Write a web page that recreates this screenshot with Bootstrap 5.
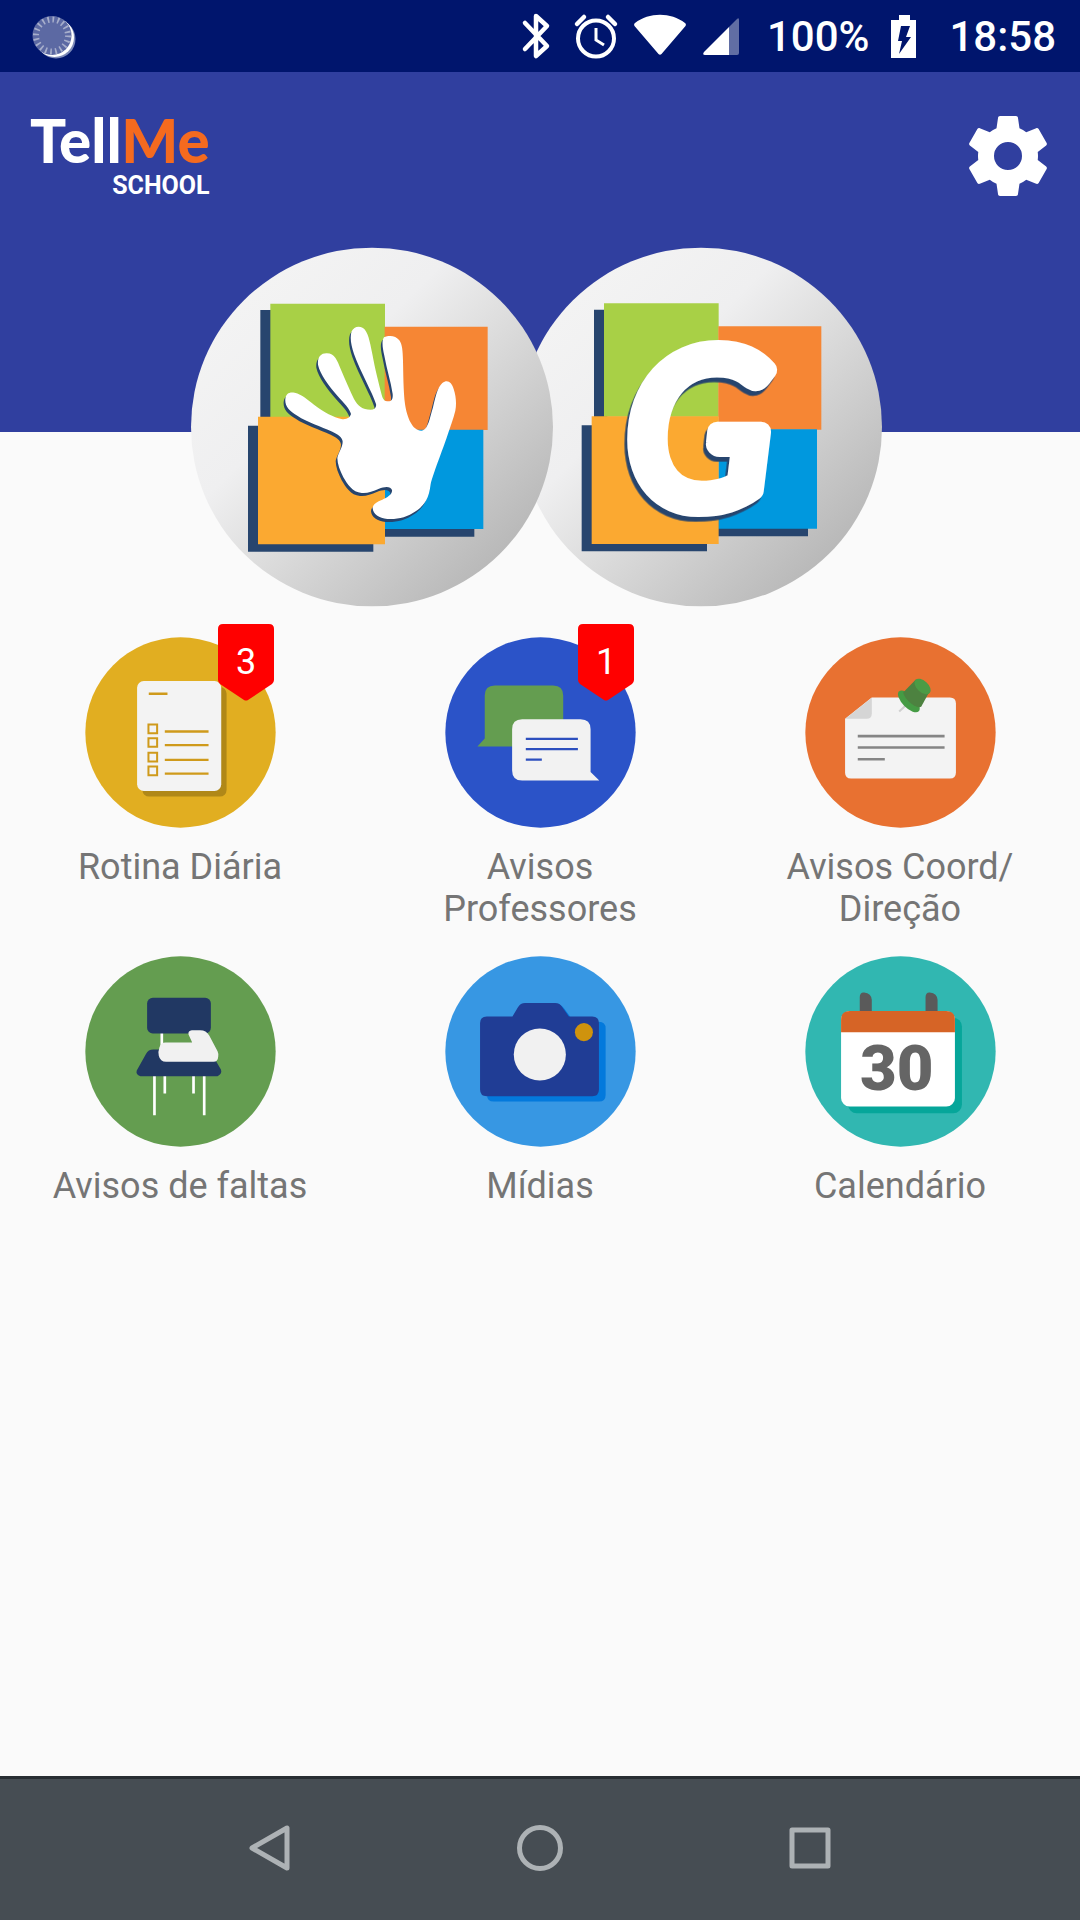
<!DOCTYPE html>
<html lang="pt-BR">
<head>
<meta charset="utf-8">
<meta name="viewport" content="width=device-width, initial-scale=1">
<title>TellMe School</title>
<link href="https://cdn.jsdelivr.net/npm/bootstrap@5.3.0/dist/css/bootstrap.min.css" rel="stylesheet">
<style>
  body { background: #fafafa; font-family: Roboto, "Liberation Sans", sans-serif; }
  svg { display: block; flex: none; }
  .status-bar { background: #00156d; height: 72px; padding: 2px 24px 0 32px; color: #fff; font-size: 42px; font-weight: 500; line-height: 48px; }
  .status-icons { gap: 12px; }
  .status-level { margin-left: 27px; margin-right: 22px; }
  .status-clock { margin-left: 32px; }
  .hero { background: linear-gradient(#303f9f 360px, #fafafa 360px); }
  .hero-top { height: 175px; padding: 0 24px 7px 30px; }
  .brand { line-height: 1; color: #fff; text-align: right; }
  .brand:hover { color: #fff; }
  .brand-name { font-family: Lato, sans-serif; font-weight: 900; font-size: 60px; line-height: 60px; }
  .brand-me { color: #f46a1f; }
  .brand-sub { font-weight: 700; font-size: 25px; line-height: 32px; }
  .plain-btn { background: none; border: 0; padding: 0; }
  .school-front { z-index: 1; }
  .school-back { margin-left: -33px; }
  .monogram { font-family: Lato, sans-serif; font-style: italic; font-weight: 400; font-size: 640px; fill: #fff; stroke: #fff; stroke-width: 60px; stroke-linejoin: round; filter: drop-shadow(-8px 14px 0 #27456e); }
  .menu { padding-top: 30px; row-gap: 26px; }
  .tile { color: #757575; font-size: 36px; line-height: 42px; gap: 18px; }
  .tile:hover { color: #757575; }
  .tile-label { max-width: 300px; text-align: center; }
  .pin-badge { left: 133px; top: -13px; }
  .nav-keys { background: #464d53; border-top: 3px solid #282e33; height: 144px; padding-bottom: 3px; }
  .nav-key { width: 25%; }
</style>
</head>
<body class="d-flex flex-column min-vh-100">

<svg width="0" height="0" class="position-absolute" aria-hidden="true">
  <defs>
    <linearGradient id="silver" x1=".15" y1=".15" x2=".88" y2=".88">
      <stop offset="0" stop-color="#f3f3f3"/><stop offset=".3" stop-color="#efeff0"/><stop offset=".5" stop-color="#dfdfdf"/><stop offset="1" stop-color="#b6b6b6"/>
    </linearGradient>
    <g id="blocks">
      <path fill="#27456e" d="M239 208h40v330h-40zM202 555h376v378H202zM600 800h281v88H600z"/>
      <path fill="#a8d046" d="M269 189h344v340H269z"/>
      <path fill="#f68634" d="M612 258h309v310H612z"/>
      <path fill="#0098de" d="M612 567h296v298H612z"/>
      <path fill="#fba931" d="M232 528h381v383H232z"/>
    </g>
    <path id="hand" d="M314 475C316 458 326 453 342 456C365 461 380 477 400 492C430 515 460 530 482 535C498 538 508 530 511 520C508 505 490 487 470 465C445 437 418 400 412 372C410 350 420 338 437 338C462 337 470 360 480 385C495 420 508 450 520 475C532 497 545 507 570 507C582 507 588 500 586 490C575 455 540 395 520 340C511 312 507 290 513 272C519 258 534 254 547 262C562 273 567 300 575 340C583 385 595 430 603 462C607 477 612 482 623 482C634 482 637 473 636 460C630 420 618 385 611 345C605 320 603 300 610 290C625 283 645 284 656 299C665 312 666 330 667 360C668 400 668 450 673 490C679 530 695 570 722 570C742 570 748 530 757 500C764 470 770 440 785 427C800 415 813 424 819 445C826 465 828 490 824 510C818 535 808 560 800 585C785 630 757 700 750 730C745 775 730 795 705 812C680 830 650 837 620 835C595 833 577 820 576 803C576 790 590 783 605 777C620 770 636 760 634 748C630 735 610 738 595 744C575 752 560 759 543 757C515 755 500 730 488 710C478 690 470 670 470 652C473 635 486 620 486 603C486 590 470 580 455 573C420 557 380 545 350 525C325 512 312 495 314 475Z"/>
  </defs>
</svg>

<div class="status-bar d-flex align-items-center justify-content-between">
  <svg width="44" height="44" viewBox="0 0 44 44" aria-hidden="true">
    <circle cx="24" cy="24" r="19.500" fill="#7d8ab8"/>
    <circle cx="22.500" cy="22.500" r="19.500" fill="#fff"/>
    <circle cx="20" cy="20.500" r="19.500" fill="#5c69a3"/>
    <circle cx="20" cy="20.500" r="16" fill="none" stroke="#a7aecb" stroke-width="6" stroke-dasharray="1.700 3.326"/>
  </svg>
  <div class="d-flex align-items-center">
    <div class="status-icons d-flex align-items-center">
      <svg width="48" height="48" viewBox="0 0 48 48" fill="none" stroke="#fff" stroke-width="4.500" stroke-linecap="round" stroke-linejoin="round" role="img" aria-label="Bluetooth"><path d="M13 10l22 23-11 10V3l11 10-22 23"/></svg>
      <svg width="48" height="48" viewBox="0 0 48 48" fill="none" stroke="#fff" stroke-width="4" role="img" aria-label="Alarme"><circle cx="24" cy="25.500" r="18"/><path d="M24 15v12l8 5" stroke-width="3"/><path d="M5 11l7-7M43 11l-7-7" stroke-width="4.500" stroke-linecap="round"/></svg>
      <svg width="56" height="48" viewBox="0 0 56 48" fill="#fff" role="img" aria-label="Wi-Fi"><path d="M3 10C17-1 39-1 53 10q1.500 1 .5 3L29.500 41q-1.500 1.500-3 0L2.500 13q-1-2 .5-3z"/></svg>
      <svg width="40" height="48" viewBox="0 0 40 48" fill="#fff" role="img" aria-label="Sinal"><path opacity=".38" d="M29 14l8-8q2-2 2 1v33q0 2-2 2h-8z"/><path d="M29 14v28H5q-3 0-1-3z"/></svg>
    </div>
    <span class="status-level">100%</span>
    <svg width="26" height="44" viewBox="0 0 26 44" role="img" aria-label="Carregando"><path fill="#fff" d="M8 0h11v5h6v38H0V5h8z"/><path fill="#00156d" d="M10 11h9l-4 11h5L8 39l3-13H7z"/></svg>
    <span class="status-clock">18:58</span>
  </div>
</div>

<header class="hero">
  <div class="hero-top d-flex align-items-center justify-content-between">
    <a href="#" class="brand d-flex flex-column text-decoration-none">
      <span class="brand-name">Tell<span class="brand-me">Me</span></span>
      <span class="brand-sub">SCHOOL</span>
    </a>
    <button type="button" class="plain-btn" aria-label="Configurações">
      <svg width="96" height="96" viewBox="0 0 24 24" fill="#fff"><path d="M19.43 12.980c.04-.32.07-.64.07-.98s-.03-.66-.07-.98l2.110-1.650c.19-.15.24-.42.12-.64l-2-3.460c-.12-.22-.39-.3-.61-.22l-2.490 1c-.52-.4-1.080-.73-1.690-.98l-.38-2.650C14.460 2.180 14.250 2 14 2h-4c-.25 0-.46.18-.49.42l-.38 2.650c-.61.25-1.170.59-1.690.98l-2.490-1c-.23-.09-.49 0-.61.22l-2 3.460c-.13.22-.07.49.12.64l2.110 1.650c-.04.32-.07.65-.07.98s.03.66.07.98l-2.110 1.650c-.19.15-.24.42-.12.64l2 3.460c.12.22.39.3.61.22l2.490-1c.52.4 1.080.73 1.690.98l.38 2.650c.03.24.24.42.49.42h4c.25 0 .46-.18.49-.42l.38-2.650c.61-.25 1.170-.59 1.690-.98l2.490 1c.23.09.49 0 .61-.22l2-3.460c.12-.22.07-.49-.12-.64zM12 15.500a3.500 3.500 0 1 1 0-7 3.500 3.500 0 0 1 0 7z"/></svg>
    </button>
  </div>
  <div class="d-flex justify-content-center pe-2">
    <button type="button" class="plain-btn school-front position-relative" aria-label="Educação infantil">
      <svg width="362" height="360" viewBox="31 19 1086 1080">
        <ellipse cx="574" cy="559" rx="543" ry="538" fill="url(#silver)"/>
        <use href="#blocks"/>
        <use href="#hand" fill="#27456e" transform="translate(-5 9)"/>
        <use href="#hand" fill="#fff"/>
      </svg>
    </button>
    <button type="button" class="plain-btn school-back">
      <svg width="362" height="360" viewBox="-3 19 1086 1080">
        <ellipse cx="540" cy="559" rx="543" ry="538" fill="url(#silver)"/>
        <use href="#blocks" transform="translate(-20 -1)"/>
        <text class="monogram" x="317" y="792">G</text>
      </svg>
    </button>
  </div>
</header>

<main class="flex-grow-1">
  <nav class="menu row row-cols-3 g-0">
    <div class="col">
      <a href="#" class="tile d-flex flex-column align-items-center text-decoration-none">
        <span class="position-relative">
          <svg width="191" height="191" viewBox="76 80 572 572" aria-hidden="true">
            <circle cx="362" cy="366" r="285" fill="#e1ae21"/>
            <rect x="248" y="230" width="252" height="328" rx="20" fill="#b08818"/>
            <rect x="232" y="212" width="252" height="329" rx="20" fill="#f3f3f3"/>
            <g fill="none" stroke="#cf9a1b" stroke-width="7"><path d="M267 250h56M315 363h131M315 404h131M315 448h131M315 489h131"/><path stroke-width="6" d="M266 342h26v26h-26zM266 383h26v26h-26zM266 427h26v26h-26zM266 468h26v26h-26z"/></g>
          </svg>
          <svg class="pin-badge position-absolute" width="56" height="77" viewBox="0 0 56 77"><path fill="#f00" d="M5 0h46q5 0 5 5v51q0 2-2 4L30 76q-2 1-4 0L2 60q-2-2-2-4V5q0-5 5-5z"/><text x="28" y="50" text-anchor="middle" font-size="36" fill="#fff">3</text></svg>
        </span>
        <span class="tile-label">Rotina Diária</span>
      </a>
    </div>
    <div class="col">
      <a href="#" class="tile d-flex flex-column align-items-center text-decoration-none">
        <span class="position-relative">
          <svg width="191" height="191" viewBox="76 80 572 572" aria-hidden="true">
            <circle cx="362" cy="366" r="285" fill="#2b53c8"/>
            <path fill="#649d50" d="M225 225h175q30 0 30 30v153H173l22-24V255q0-30 30-30z"/>
            <path fill="#f2f2f2" d="M307 326h175q30 0 30 30v128l26 26H307q-30 0-30-30V356q0-30 30-30z"/>
            <path stroke="#2d4fbe" stroke-width="7" d="M318 385h156M318 416h156M318 447h48"/>
          </svg>
          <svg class="pin-badge position-absolute" width="56" height="77" viewBox="0 0 56 77"><path fill="#f00" d="M5 0h46q5 0 5 5v51q0 2-2 4L30 76q-2 1-4 0L2 60q-2-2-2-4V5q0-5 5-5z"/><text x="28" y="50" text-anchor="middle" font-size="36" fill="#fff">1</text></svg>
        </span>
        <span class="tile-label">Avisos Professores</span>
      </a>
    </div>
    <div class="col">
      <a href="#" class="tile d-flex flex-column align-items-center text-decoration-none">
        <svg width="191" height="191" viewBox="106 80 572 572" aria-hidden="true">
          <circle cx="392" cy="366" r="285" fill="#e87131"/>
          <path fill="#f3f3f3" d="M306 261h234q18 0 18 18v207q0 18-18 18H244q-18 0-18-18V325z"/>
          <path fill="#d5d5d5" d="M306 262v48q0 15-15 15h-64z"/>
          <path stroke="#858585" stroke-width="8" d="M264 377h260M264 411h260M264 446h81"/>
          <path stroke="#cfcfcf" stroke-width="6" d="M388 303l22-20"/>
          <ellipse cx="417" cy="273" rx="42" ry="19" transform="rotate(45 417 273)" fill="#459b44"/>
          <path fill="#4d8240" d="M400 246l38-39 41 36-25 46q-10 5-30-10t-24-33z"/>
          <ellipse cx="458" cy="228" rx="29" ry="17" transform="rotate(42 458 228)" fill="#4b9b45"/>
        </svg>
        <span class="tile-label">Avisos Coord/ Direção</span>
      </a>
    </div>
    <div class="col">
      <a href="#" class="tile d-flex flex-column align-items-center text-decoration-none">
        <svg width="191" height="191" viewBox="135 47 572 572" aria-hidden="true">
          <circle cx="421" cy="333" r="285" fill="#649d50"/>
          <path stroke="#fff" stroke-width="8" d="M365 275v50M343 400v124M374 400v59M460 400v59M492 400v124"/>
          <rect x="321" y="172" width="191" height="107" rx="17" fill="#213863"/>
          <path fill="#213863" d="M340 327h150q17 0 24 12l28 48q5 12-10 20H301q-15-4-11-17l28-50q6-13 22-13z"/>
          <path fill="#f1f1f1" d="M376 306h80l-11-24q-2-12 10-13h25q18 0 27 16l25 47q3 6 2 16-1 16-14 16H378q-18 0-22-18-3-12 2-26 4-14 18-14z"/>
        </svg>
        <span class="tile-label">Avisos de faltas</span>
      </a>
    </div>
    <div class="col">
      <a href="#" class="tile d-flex flex-column align-items-center text-decoration-none">
        <svg width="191" height="191" viewBox="76 47 572 572" aria-hidden="true">
          <circle cx="362" cy="333" r="285" fill="#3797e3"/>
          <path fill="#0379dc" d="M415 192q14 4 19 14l28 38h75q20 0 20 20v199q0 20-20 20H222q-20 0-20-20V264z"/>
          <path fill="#203d95" d="M316 188h90q14 0 22 13l19 27h70q20 0 20 20v199q0 20-20 20H201q-20 0-20-20V248q0-20 20-20h77l16-27q8-13 22-13z"/>
          <circle cx="360" cy="342" r="78" fill="#f1f1f1"/>
          <circle cx="492" cy="275" r="27" fill="#cf930d"/>
        </svg>
        <span class="tile-label">Mídias</span>
      </a>
    </div>
    <div class="col">
      <a href="#" class="tile d-flex flex-column align-items-center text-decoration-none">
        <svg width="191" height="191" viewBox="76 47 572 572">
          <circle cx="362" cy="333" r="285" fill="#31b7b1"/>
          <rect x="205" y="232" width="341" height="286" rx="26" fill="#06a69a"/>
          <path fill="#5a5a5a" d="M240 220v-50q0-15 13-14 22 3 23 22v42zM437 220v-50q0-15 13-14 22 3 23 22v42z"/>
          <rect x="184" y="212" width="341" height="286" rx="26" fill="#fff"/>
          <path fill="#d66426" d="M184 275v-37q0-26 26-26h289q26 0 26 26v37z"/>
          <text x="351" y="449" text-anchor="middle" font-size="190" font-weight="900" fill="#656565">30</text>
        </svg>
        <span class="tile-label">Calendário</span>
      </a>
    </div>
  </nav>
</main>

<footer class="nav-keys d-flex align-items-center justify-content-center">
  <button type="button" class="nav-key plain-btn d-flex justify-content-center" aria-label="Voltar"><svg width="48" height="48" viewBox="0 0 48 48" fill="none" stroke="#adb2b5" stroke-width="5" stroke-linejoin="round"><path d="M41 4v40L6 24z"/></svg></button>
  <button type="button" class="nav-key plain-btn d-flex justify-content-center" aria-label="Início"><svg width="48" height="48" viewBox="0 0 48 48" fill="none" stroke="#adb2b5" stroke-width="5"><circle cx="24" cy="24" r="20.500"/></svg></button>
  <button type="button" class="nav-key plain-btn d-flex justify-content-center" aria-label="Recentes"><svg width="48" height="48" viewBox="0 0 48 48" fill="none" stroke="#adb2b5" stroke-width="5" stroke-linejoin="round"><path d="M6 6h36v36H6z"/></svg></button>
</footer>

<script src="https://cdn.jsdelivr.net/npm/bootstrap@5.3.0/dist/js/bootstrap.bundle.min.js"></script>
</body>
</html>
